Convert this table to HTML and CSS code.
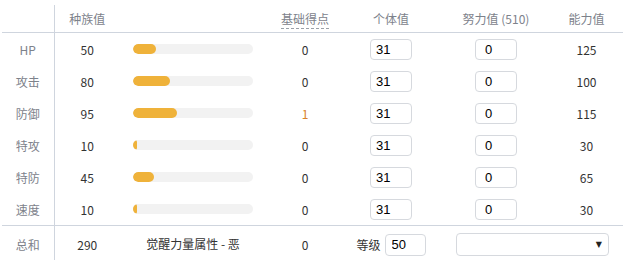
FILE: index.html
```html
<!DOCTYPE html>
<html lang="zh">
<head>
<meta charset="utf-8">
<link rel="stylesheet" href="styles.css">
</head>
<body>
<table class="stats">
  <colgroup>
    <col class="c-label"><col class="c-base"><col class="c-bar"><col class="c-ep"><col class="c-iv"><col class="c-ev"><col class="c-stat">
  </colgroup>
  <thead>
    <tr>
      <th class="label"></th>
      <th>种族值</th>
      <th></th>
      <th><span class="dashed">基础得点</span></th>
      <th>个体值</th>
      <th>努力值 (510)</th>
      <th>能力值</th>
    </tr>
  </thead>
  <tbody>
    <tr>
      <td class="label">HP</td><td>50</td>
      <td class="barcell"><div class="bar"><div class="fill" style="width:23px"></div></div></td>
      <td>0</td>
      <td><input class="iv" value="31"></td>
      <td><input class="ev" value="0"></td>
      <td>125</td>
    </tr>
    <tr>
      <td class="label">攻击</td><td>80</td>
      <td class="barcell"><div class="bar"><div class="fill" style="width:37px"></div></div></td>
      <td>0</td>
      <td><input class="iv" value="31"></td>
      <td><input class="ev" value="0"></td>
      <td>100</td>
    </tr>
    <tr>
      <td class="label">防御</td><td>95</td>
      <td class="barcell"><div class="bar"><div class="fill" style="width:44px"></div></div></td>
      <td class="hl">1</td>
      <td><input class="iv" value="31"></td>
      <td><input class="ev" value="0"></td>
      <td>115</td>
    </tr>
    <tr>
      <td class="label">特攻</td><td>10</td>
      <td class="barcell"><div class="bar"><div class="fill" style="width:4px"></div></div></td>
      <td>0</td>
      <td><input class="iv" value="31"></td>
      <td><input class="ev" value="0"></td>
      <td>30</td>
    </tr>
    <tr>
      <td class="label">特防</td><td>45</td>
      <td class="barcell"><div class="bar"><div class="fill" style="width:21px"></div></div></td>
      <td>0</td>
      <td><input class="iv" value="31"></td>
      <td><input class="ev" value="0"></td>
      <td>65</td>
    </tr>
    <tr>
      <td class="label">速度</td><td>10</td>
      <td class="barcell"><div class="bar"><div class="fill" style="width:4px"></div></div></td>
      <td>0</td>
      <td><input class="iv" value="31"></td>
      <td><input class="ev" value="0"></td>
      <td>30</td>
    </tr>
  </tbody>
  <tfoot>
    <tr>
      <td class="label">总和</td><td>290</td>
      <td class="barcell">觉醒力量属性 - 恶</td>
      <td>0</td>
      <td><span class="level">等级 <input class="lv" value="50"></span></td>
      <td colspan="2"><span class="select"><span class="arrow">▼</span></span></td>
    </tr>
  </tfoot>
</table>
</body>
</html>
```

FILE: styles.css
```css
html, body {
  margin: 0;
  padding: 0;
  background: #fff;
}
body {
  font-family: "Noto Sans CJK SC", "Noto Sans", sans-serif;
  font-size: 12px;
  color: #333;
}
.stats {
  margin: 5px 0 0 2px;
  border-collapse: collapse;
  table-layout: fixed;
  width: 621px;
}
.c-label { width: 52px; }
.c-base { width: 66px; }
.c-bar { width: 150px; }
.c-ep { width: 70px; }
.c-iv { width: 102px; }
.c-ev { width: 108px; }
.c-stat { width: 73px; }

.stats th {
  font-weight: normal;
  color: #7d828b;
  height: 27px;
  padding: 0;
  text-align: center;
  vertical-align: middle;
  border-bottom: 1px solid #cfd5de;
}
.stats td {
  height: 32px;
  padding: 0;
  text-align: center;
  vertical-align: middle;
}
.stats .label {
  color: #7d828b;
  border-right: 1px solid #cfd5de;
}
.stats tfoot td {
  border-top: 1px solid #cfd5de;
  height: 33px;
  padding-top: 2px;
}
.dashed {
  border-bottom: 1px dashed #9aa0a8;
  padding-bottom: 1px;
}
.barcell {
  padding: 0 17px 0 13px !important;
}
.bar {
  height: 10px;
  border-radius: 5px;
  background: #f2f2f2;
  overflow: hidden;
}
.fill {
  height: 10px;
  border-radius: 5px;
  background: #efb23a;
}
.hl {
  color: #d9822b;
}
input {
  font-family: "Liberation Sans", Arial, sans-serif;
  font-size: 13px;
  color: #000;
  border: 1px solid #d6d9de;
  border-radius: 4px;
  height: 21px;
  box-sizing: border-box;
  margin: 0;
  outline: none;
  vertical-align: middle;
}
.iv {
  width: 42px;
  padding: 0 0 0 5px;
}
.ev {
  width: 42px;
  padding: 0 0 0 9px;
}
.level {
  display: inline-flex;
  align-items: center;
  gap: 4px;
  color: #333;
}
.lv {
  width: 41px;
  height: 22px;
  padding: 0 0 0 6px;
}
.select {
  display: inline-flex;
  align-items: center;
  justify-content: flex-end;
  box-sizing: border-box;
  width: 153px;
  height: 23px;
  border: 1px solid #d6d9de;
  border-radius: 4px;
  padding-right: 6px;
  vertical-align: middle;
}
.arrow {
  font-family: "DejaVu Sans", sans-serif;
  font-size: 8px;
  color: #222;
}
```
